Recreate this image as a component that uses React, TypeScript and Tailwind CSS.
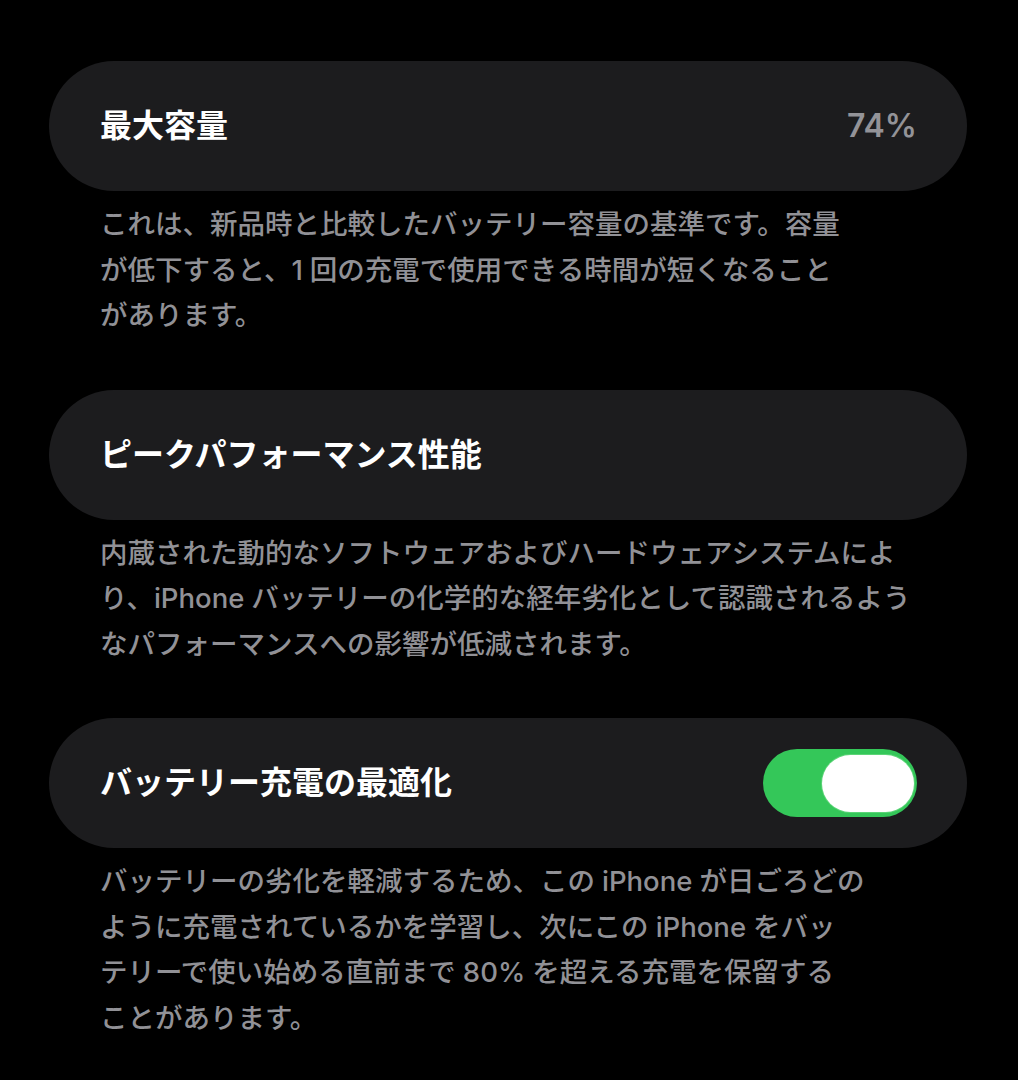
import React from "react";

const font = { fontFamily: '"Inter", "Noto Sans CJK JP", sans-serif' };

// Latin runs inside Japanese text get a little breathing room on each side.
function L({ children, l = true, r = true }: { children: React.ReactNode; l?: boolean; r?: boolean }) {
  return <span className={`${l ? "ml-[7px]" : ""} ${r ? "mr-[7px]" : ""}`}>{children}</span>;
}

function Card({ title, children }: { title: string; children?: React.ReactNode }) {
  return (
    <div className="flex h-[130px] items-center justify-between rounded-full bg-[#1c1c1e] pl-[51px] pr-[50px]">
      <span className="text-[32px] font-bold text-white">{title}</span>
      {children}
    </div>
  );
}

function Note({ lines }: { lines: React.ReactNode[] }) {
  return (
    <p className="mt-[11px] pl-[51px] text-[27.5px] font-medium leading-[45.5px] text-[#919196]">
      {lines.map((l, i) => (
        <span key={i} className="block whitespace-nowrap">
          {l}
        </span>
      ))}
    </p>
  );
}

export default function App() {
  return (
    <div className="min-h-screen w-full bg-black" style={font}>
      <div className="flex w-[967px] flex-col pl-[49px] pt-[61px]">
        <Card title="最大容量">
          <span className="text-[32px] font-semibold text-[#939398]">74%</span>
        </Card>
        <Note
          lines={[
            "これは、新品時と比較したバッテリー容量の基準です。容量",
            <>
              が低下すると、<L l={false}>1</L>回の充電で使用できる時間が短くなること
            </>,
            "があります。",
          ]}
        />

        <div className="mt-[51px]">
          <Card title="ピークパフォーマンス性能" />
        </div>
        <Note
          lines={[
            "内蔵された動的なソフトウェアおよびハードウェアシステムによ",
            <>
              り、<L l={false}>iPhone</L>バッテリーの化学的な経年劣化として認識されるよう
            </>,
            "なパフォーマンスへの影響が低減されます。",
          ]}
        />

        <div className="mt-[51px]">
          <Card title="バッテリー充電の最適化">
            <div className="flex h-[68px] w-[154px] items-center justify-end rounded-full bg-[#34c759] pr-[3px]">
              <div className="h-[57px] w-[92px] rounded-full bg-white shadow-[0_0_0_1px_rgba(120,220,140,0.6)]" />
            </div>
          </Card>
        </div>
        <Note
          lines={[
            <>
              バッテリーの劣化を軽減するため、この<L>iPhone</L>が日ごろどの
            </>,
            <>
              ように充電されているかを学習し、次にこの<L>iPhone</L>をバッ
            </>,
            <>
              テリーで使い始める直前まで<L>80%</L>を超える充電を保留する
            </>,
            "ことがあります。",
          ]}
        />
      </div>
    </div>
  );
}
